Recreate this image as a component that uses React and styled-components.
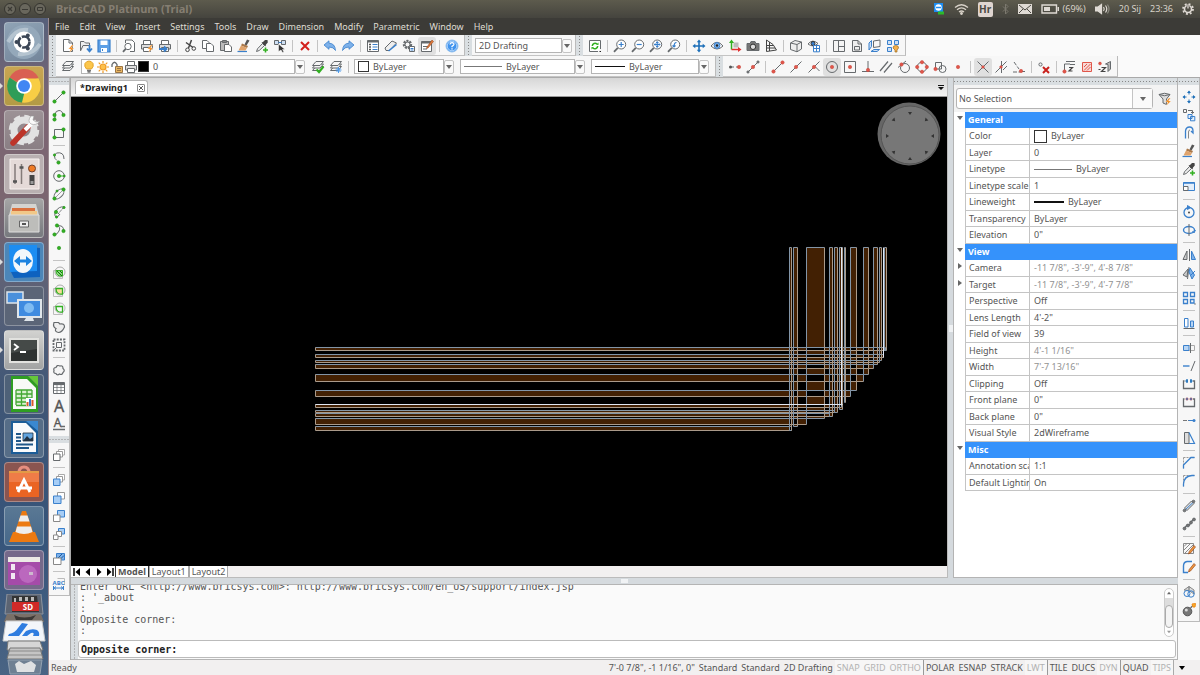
import React from "react";
import styled, { createGlobalStyle, css } from "styled-components";

const GREY = "#666a6d";
const BLUE = "#3a80cc";
const RED = "#e0564a";
const GREEN = "#32b022";
const ORANGE = "#f08a1c";

const GlobalStyle = createGlobalStyle`
* {
  box-sizing: border-box;
}
body {
  margin: 0;
  background: #fafafa;
  color: #555;
  font-family: "Noto Sans", "Open Sans", sans-serif;
  font-size: 9px;
  line-height: 12px;
}
button, select, input {
  font: inherit;
  color: inherit;
  margin: 0;
  padding: 0;
  border: 0;
  background: none;
  border-radius: 0;
}
`;

/* ---------- icons, all on a 14 x 14 grid ---------- */

const Dot = ({ x, y, c = GREEN, r = 1.7 }) => (
  <circle cx={x} cy={y} r={r} fill={c} stroke={c === GREEN ? "#1e8c14" : "#c8453b"} strokeWidth="0.5" />
);
const Bolt = () => <path d="M11 6 L7.5 10 H9.8 L8.5 13.5 L13 9 H10.5 L12.5 6Z" fill={ORANGE} stroke="#fff" strokeWidth="0.3" />;
const Sheets = () => (
  <g fill="#f5f5f5">
    <path d="M1.5 10.5 L5 6.500 H12.500 L9 10.500Z" />
    <path d="M1.5 8 L5 4 H12.500 L9 8Z" />
    <path d="M1.5 5.500 L5 1.500 H12.500 L9 5.500Z" />
  </g>
);
const Printer = () => (
  <g>
    <path d="M3.500 5.500 V1.500 H10.500 V5.500" fill="#fff" />
    <path d="M1.500 5.500 H12.500 V10 H1.500Z" fill="#ddd" />
    <path d="M3.500 8.500 H10.500 V12.500 H3.500Z" fill="#fff" />
  </g>
);
const Lens = ({ children }) => (
  <g>
    <circle cx="8.2" cy="5.500" r="4.500" fill="#fff" />
    <path d="M4.800 8.800 L1 12.800" strokeWidth="1.800" />
    <g stroke={BLUE} strokeWidth="1.200">{children}</g>
  </g>
);
const Brush = () => (
  <g stroke="none">
    <path d="M10 0.500 L12.500 1.500 L9.500 6.500 L7.500 5.500Z" fill="#555" />
    <path d="M5 4.500 L11 7 L10 9 L4 6.500Z" fill="#a9784a" />
    <path d="M4 6.500 L10 9 L8.500 11.500 H1.500Z" fill="#e0a36b" />
    <path d="M0.500 12.500 H10" stroke={BLUE} strokeWidth="1.200" />
  </g>
);
const Dropper = () => (
  <g>
    <path d="M1.500 12.500 L2.500 9.800 L7.500 4.500 L9.500 6.500 L4.200 11.500Z" fill="#eee" />
    <path d="M6.500 3.500 L8 3 L10 1 L12.500 1 L12.800 3.500 L11 5.500 L10.500 7.500Z" fill="#444" stroke="none" />
    <path d="M10.500 8.500 V13.500 M8 11 H13" stroke={GREEN} strokeWidth="1.600" />
  </g>
);
const Pencil = () => (
  <path d="M12 3.500 L13.500 5 L8.500 11 L6.500 12 L7.200 9.500Z" fill="#f0963c" stroke="#9a4c22" strokeWidth="0.700" />
);
const RoundArrows = () => (
  <g stroke={GREEN} strokeWidth="1.500">
    <path d="M4.300 7 A2.800 2.800 0 0 1 9 5" />
    <path d="M9.700 7 A2.800 2.800 0 0 1 5 9" />
    <path d="M8 5.800 L10.500 6 V3.500Z M6 8.200 L3.500 8 V10.500Z" fill={GREEN} stroke="none" />
  </g>
);

const ICONS = {
  newFile: <g><path d="M2.500 0.500 H8 L11.500 4 V12.500 H2.500Z" fill="#fff" /><path d="M8 0.500 V4 H11.500" /><Bolt /></g>,
  open: <g><path d="M1.500 11.500 V2.500 H5 L6.500 4 H10.500 V6" fill="#eee" /><path d="M1.500 12 L4 6.500 H10" /><path d="M10.500 6 V12 M8 9.500 L10.500 12.300 L13 9.500" stroke={BLUE} strokeWidth="1.800" /></g>,
  save: <g stroke={BLUE}><path d="M1 1 H13 V13 H1Z" fill="#5c9fe6" strokeWidth="1.200" /><path d="M3.500 1.500 H10.500 V6 H3.500Z M4 9 H10 V13 H4Z" fill="#fff" stroke="none" /><path d="M5.500 10 V12" /></g>,
  preview: <g><path d="M3.500 4 V1 H10 L12.500 3.500 V12.500 H8" fill="#fff" /><circle cx="6" cy="7.500" r="3.200" fill="#fff" /><path d="M3.700 9.800 L1 12.800" strokeWidth="1.800" /></g>,
  print: <g><Printer /><Bolt /></g>,
  publish: <g><Printer /><path d="M1 10 H8 M6 7.500 L8.500 10 L6 12.500" stroke={BLUE} strokeWidth="1.800" /></g>,
  cut: <g stroke="#444"><path d="M8.500 1 L5.500 9 M3 3.500 L10 8.500" strokeWidth="1.500" /><circle cx="4.500" cy="10.800" r="1.800" /><circle cx="10.800" cy="9.500" r="1.800" /></g>,
  copy: <g fill="#fff"><path d="M1.500 1.500 H6 L8.500 4 V9.500 H1.500Z" /><path d="M5.500 4.500 H10 L12.500 7 V12.500 H5.500Z" /></g>,
  paste: <g><path d="M1.500 2.500 H9.500 V11.500 H1.500Z" fill="#bbb" /><path d="M3.500 1.500 H7.500 V3.500 H3.500Z" fill="#888" /><path d="M5.500 5.500 H10 L12.500 8 V12.500 H5.500Z" fill="#fff" /></g>,
  brush: <Brush />,
  dropper: <Dropper />,
  select: <g><path d="M1.500 1.500 H5.500 V5.500 H1.500Z M8.500 1.500 H12.500 V5.500 H8.500Z" fill="#cfe0f4" /><path d="M5.500 3.500 H8.500" stroke={BLUE} /><path d="M5.500 5 L12 10.500 H9.500 L11 13 L9.500 13.500 L8 11 L5.500 12.500Z" fill="#333" stroke="#fff" strokeWidth="0.500" /></g>,
  erase: <path d="M3 3 L11 11 M11 3 L3 11" stroke="#d3201c" strokeWidth="2" />,
  undo: <path d="M1 6 L6 1.800 V4.200 Q12 4.300 12.500 11.500 Q10.500 8 6 8 V10.300Z" fill="#7db1ea" stroke={BLUE} strokeWidth="0.800" />,
  redo: <path d="M13 6 L8 1.800 V4.200 Q2 4.300 1.500 11.500 Q3.500 8 8 8 V10.300Z" fill="#7db1ea" stroke={BLUE} strokeWidth="0.800" />,
  props: <g><path d="M1.500 1.500 H12.500 V12.500 H1.500Z" fill="#fff" /><path d="M1.500 2.500 H12.500" strokeWidth="2" /><path d="M3 5.500 H5 M3 8 H5 M3 10.500 H5" stroke="#555" strokeWidth="1.400" /><path d="M6.500 5.500 H11.500 M6.500 8 H11.500 M6.500 10.500 H11.500" stroke={BLUE} strokeWidth="1.200" /></g>,
  eraser: <g><path d="M1 9 L8 2 L12.500 4 L5.500 11.500 L2 11.500Z" fill="#eee" /><path d="M4.500 12 L12.500 5.500" stroke={BLUE} strokeWidth="1.600" /></g>,
  gear: <g><circle cx="5.500" cy="5.500" r="3.500" strokeWidth="2.400" strokeDasharray="2 1" /><circle cx="5.500" cy="5.500" r="2.500" /><path d="M7.500 7.500 H12.500 V12.500 H7.500Z" fill="#fff" /><path d="M8.500 9.500 H11.500 M8.500 11 H11.500" stroke={BLUE} /></g>,
  edit: <g><path d="M1.500 2.500 H11.500 V12.500 H1.500Z" fill="#fff" /><path d="M1.500 3.500 H11.500" strokeWidth="2" /><path d="M3 7.500 H8 M3 10 H7" /><path d="M12 1 L13.500 2.500 L8 9 L6.500 9.500 L7 8Z" fill="#e07a3a" stroke="#9a4c22" strokeWidth="0.600" /></g>,
  help: <g><circle cx="7" cy="7" r="6" fill="#3f93ee" stroke="#8fbfee" /><circle cx="7" cy="7" r="4.800" stroke="#fff" strokeWidth="0.600" /><path d="M5 5.500 Q5.200 3.600 7 3.600 Q9 3.700 8.900 5.400 Q8.700 6.500 7 7.300 V8.300 M7 9.300 V10.500" stroke="#fff" strokeWidth="1.300" /></g>,
  refresh: <g><path d="M12.500 10 V1.500 H1.500 V12.500 H10" fill="#fff" /><RoundArrows /><path d="M11.500 12.500 H13" stroke="#222" /></g>,
  zoomIn: <Lens><path d="M8.200 3 V8 M5.700 5.500 H10.700" /></Lens>,
  zoomOut: <Lens><path d="M5.700 5.500 H10.700" /></Lens>,
  zoomAll: <Lens><path d="M8.200 2.300 V8.700 M5 5.500 H11.400" /><path d="M7 3.500 H9.500 M7 7.500 H9.500 M6.200 4.500 V6.500 M10.200 4.500 V6.500" /></Lens>,
  zoomPrev: <Lens><path d="M9.500 3.500 Q7 3.500 7 8 M5.500 6.500 L7 8 L8.500 6.500" /></Lens>,
  pan: <g stroke="#1d6fb8" strokeWidth="1.600"><path d="M7 2 V12 M2 7 H12" /><path d="M4.800 3.300 L7 0.500 L9.200 3.300Z M4.800 10.700 L7 13.500 L9.200 10.700Z M3.300 4.800 L0.500 7 L3.300 9.200Z M10.700 4.800 L13.500 7 L10.700 9.200Z" fill="#1d6fb8" stroke="none" /></g>,
  eye: <g><path d="M1 7 Q7 -0.500 13 7 Q7 13 1 7Z" fill="#fff" /><circle cx="7" cy="6.500" r="2.900" fill="#7db1ea" stroke={BLUE} /><circle cx="7" cy="6.500" r="1.200" fill="#222" stroke="none" /></g>,
  axes: <g><path d="M5.500 3.500 H10.500 V8.500 H5.500Z" fill="#bbb" stroke="none" /><path d="M3.500 10.500 V2" stroke={GREEN} strokeWidth="1.500" /><path d="M1 4 L3.500 0.500 L6 4Z" fill={GREEN} stroke="none" /><path d="M3.500 10.500 H12" stroke="#e03030" strokeWidth="1.500" /><path d="M10 8 L13.500 10.500 L10 13Z" fill="#e03030" stroke="none" /></g>,
  camera: <g><path d="M1 4.500 H4 L5 2.500 H9 L10 4.500 H13 V11.500 H1Z" fill="#777" /><circle cx="7" cy="7.800" r="2.700" fill="#ddd" stroke="#333" /></g>,
  persp: <g stroke="#444"><path d="M2.500 1 V12.500 L12.500 11 L9 5.500Z M2.500 6.500 H9.500 M5.500 3 V12 M2.500 9 L11 9" /></g>,
  cube: <g><path d="M1.500 4 L6 1.500 L12.500 3 V10 L8 12.800 L1.500 10.500Z" fill="#eee" /><path d="M1.500 4 L8 5.500 L12.500 3 M8 5.500 V12.800" /></g>,
  views: <g><path d="M1 5 Q5.500 -0.500 11 4.500 Q6 9 1 5Z" fill="#fff" /><circle cx="6" cy="4.500" r="2" fill={BLUE} stroke="#333" /><path d="M6.500 6.500 H12.500 V12.800 H6.500Z M6.500 9.500 H12.500 M9.500 6.500 V12.800" stroke={BLUE} fill="#fff" /></g>,
  viewports: <g fill="#f4f4f4"><path d="M1.500 1.500 H12.500 V12.500 H1.500Z M6.500 1.500 V12.500 M6.500 7.500 H12.500" /></g>,
  layoutNew: <g><path d="M2.500 1.500 H8 L11.500 5 V12.500 H2.500Z" fill="#eee" /><path d="M8 1.500 V5 H11.500 M4.500 7.500 H9.500 V11 H4.500Z" /></g>,
  planes: <g><path d="M5.500 2 L12 1 V7.500 L5.500 8.500Z" /><path d="M1 4 L3.500 1.500 V7.500 L1 11Z M3 12.500 L6 10.500 H11.500 L9 12.500Z" stroke={BLUE} fill="#cfe0f4" /></g>,
  blocks: <g stroke={BLUE} fill="#cfe0f4"><path d="M1.500 1.500 H5.500 V5.500 H1.500Z M8.500 1.500 H12.500 V5.500 H8.500Z M1.500 8.500 H5.500 V12.500 H1.500Z" /><path d="M7 9 Q7 6.500 9.800 6.500 Q12.800 6.500 12.500 9 L11 11 V13 H9 V11Z" fill="#f5b04a" stroke="#9a6a22" strokeWidth="0.700" /></g>,
  layers: <Sheets />,
  layerOk: <g><Sheets /><path d="M5.500 9.500 L8 12 L12.500 6.500" stroke={GREEN} strokeWidth="2.200" /></g>,
  layerNew: <g><Sheets /><path d="M9.500 7 V13 M6.500 10 H12.500 M7.500 8 L11.500 12 M11.500 8 L7.500 12" stroke="#4f9bea" /></g>,
  bulb: <g><path d="M4.500 9 Q2 6.500 3 3.500 Q4.500 1 7 1 Q9.500 1 11 3.500 Q12 6.500 9.500 9Z" fill="#fcc64b" stroke="#e3a32a" /><path d="M5 10.500 H9 M5.500 12 H8.500" stroke="#777" strokeWidth="1.300" /></g>,
  sun: <g stroke="#f09a22" strokeWidth="1.200"><circle cx="7" cy="7" r="3" fill="#fcc04b" /><path d="M7 1 V3 M7 11 V13 M1 7 H3 M11 7 H13 M2.700 2.700 L4.200 4.200 M9.800 9.800 L11.300 11.300 M11.300 2.700 L9.800 4.200 M4.200 9.800 L2.700 11.300" /></g>,
  lock: <g><path d="M2 7 V4.500 Q4.500 0 7 4.500 V7" strokeWidth="1.300" /><path d="M5.500 6.500 H12.500 V12.500 H5.500Z" fill="#e8b560" stroke="#9a7444" /><path d="M7 8.500 H11 M7 10.500 H11" stroke="#9a7444" /></g>,
  printer: <Printer />,
  snapEnd: <g><path d="M3 7 H11" strokeDasharray="3 2" /><circle cx="2.500" cy="7" r="1.500" fill="#555" stroke="none" /><Dot x={11} y={7} c={RED} /></g>,
  snapNear: <g><path d="M1.500 12.500 L12.500 1.500" /><Dot x={7} y={7} c={RED} /><circle cx="2" cy="12" r="1.100" fill="#777" /><circle cx="12" cy="2" r="1.100" fill="#777" /></g>,
  snapLine: <g><path d="M2.500 11.500 L11.500 2.500" /><Dot x={2.500} y={11.500} c={RED} /><Dot x={11.500} y={2.500} c={RED} /></g>,
  snapMid: <g><path d="M1.500 12.500 L12.500 1.500" /><Dot x={7} y={7} c={RED} /></g>,
  snapCross: <g><path d="M1.500 12.500 L12.500 1.500 M8.500 7 L12.500 11" /><Dot x={7} y={7} c={RED} /></g>,
  snapCentre: <g><circle cx="7" cy="7" r="5.500" /><Dot x={7} y={7} c={RED} /></g>,
  snapBox: <g><path d="M1.500 1.500 H12.500 V12.500 H1.500Z" /><Dot x={7} y={7} c={RED} /></g>,
  snapPerp: <g><path d="M7 1 V11 M1 11.500 H13" /><Dot x={7} y={10} c={RED} /></g>,
  snapPar: <path d="M1 11 L9 1.500 M5 12.500 L13 3" strokeWidth="1.200" />,
  snapTan: <g><circle cx="8" cy="8" r="4.500" /><path d="M1 7.500 L9 1" /><Dot x={4.500} y={4.500} c={RED} /></g>,
  snapQuad: <g><circle cx="7" cy="7" r="4.800" /><Dot x={7} y={2.200} c={RED} /><Dot x={7} y={11.800} c={RED} /><Dot x={2.200} y={7} c={RED} /><Dot x={11.800} y={7} c={RED} /></g>,
  snapIns: <g><path d="M2.500 2.500 H8.500 V9 H2.500Z" /><circle cx="9.500" cy="9" r="3.500" /><Dot x={2.500} y={9} c={RED} /></g>,
  snapNode: <Dot x={7} y={7} c={RED} />,
  snapX: <g><path d="M1.500 1.500 L12.500 12.500 M12.500 1.500 L1.500 12.500" /><Dot x={7} y={7} c={RED} r={1.300} /></g>,
  snapApp: <g><path d="M1.500 12.500 L12.500 1.500 M7.500 1 V13 M9 10 L13 6" /><Dot x={7} y={7} c={RED} r={1.300} /></g>,
  snapExt: <g><path d="M2 2 L7 9 M9 11.500 H13 M1 12 H8" strokeDasharray="4 1.500" /><Dot x={9} y={11} c={RED} /></g>,
  snapOff: <g><circle cx="3.500" cy="4.500" r="1.600" /><path d="M6 7 L12 13 M12 7 L6 13" stroke="#c9201c" strokeWidth="2" /></g>,
  trackZ: <g><path d="M2.500 11 V4 H8 M4 1.500 H13 M8 4.500 H13" /><path d="M7 7.500 H10.500 L7 11 H10.500" stroke="#444" strokeWidth="1.200" /><Dot x={2.500} y={11.500} c={RED} /></g>,
  hatchSnap: <path d="M2.500 2.500 H11.500 V11.500 H2.500Z M4 10.500 L10.500 4 M4 7 L7 4 M7 10.500 L10.500 7" stroke={RED} fill="#f7d9d6" />,
  cubeZ: <g><path d="M7.500 4 L12.500 1.500 V9 L10 11.500 V4.500Z" fill="#bbb" /><path d="M3.500 7.500 H7.500 L3.500 11.500 H7.500 M0.500 9.500 H2.500" stroke="#444" strokeWidth="1.200" /><Dot x={2} y={3.500} c={RED} r={1.400} /></g>,
  line: <g><path d="M2.500 11.500 L11.500 2.500" /><Dot x={2.500} y={11.500} /><Dot x={11.500} y={2.500} /></g>,
  polyline: <g><path d="M3 11 V6.500 Q3.500 2.500 7 2.500 Q10.500 2.500 11 7" /><Dot x={2.500} y={7} /><Dot x={2.500} y={11.500} /><Dot x={11.500} y={7} /></g>,
  rect: <g><path d="M2.500 3.500 H11.500 V11.500 H2.500Z" /><Dot x={2.500} y={11.500} /><Dot x={11.500} y={3.500} /></g>,
  arc: <g><path d="M3 7.500 Q1 4 4.500 2 Q12 0.500 12 8" /><Dot x={2.500} y={4} r={1.200} /><Dot x={6.500} y={11.500} /><path d="M3 7.500 L6 10.500" strokeDasharray="2 1" /></g>,
  circle: <g><circle cx="7" cy="7" r="5.300" /><Dot x={7} y={7} /><path d="M7 7 H12.500" stroke={GREEN} /><Dot x={12.300} y={7} r={1} /></g>,
  ellipse: <g><ellipse cx="7" cy="7" rx="6" ry="3.500" transform="rotate(-45 7 7)" /><path d="M3 11 L10 4" strokeWidth="0.600" /><Dot x={2.500} y={11.500} /><Dot x={11.500} y={2.500} /><Dot x={5} y={4} r={1.100} /></g>,
  ellipseArc: <g><path d="M12 2 Q7 1 3.500 6.500 Q1.500 11 5 12.500 L8 9" /><path d="M6 9 L12 2" strokeDasharray="2 1" /><Dot x={12} y={2.500} r={1.200} /><Dot x={4} y={7} /><Dot x={4.500} y={12} r={1.200} /></g>,
  spline: <g><path d="M5 2.500 Q9 4 7 8 Q5 12 2.500 11.500 M5 3 Q12 1.500 11.500 8" /><Dot x={5} y={2.500} /><Dot x={11.500} y={8} /><Dot x={2.500} y={11.500} /></g>,
  point: <Dot x={7} y={7} />,
  hatch: <g><path d="M1.500 4.500 H10.500 V12.500 H1.500Z" stroke="#bbb" /><circle cx="8" cy="6" r="5" stroke="#aaa" /><path d="M4 4.500 H10.500 V10 Q4 11 4 4.500Z" fill="#8bd381" stroke={GREEN} /><path d="M5 5 L10 10 M8 5 L10 7" stroke="#117a08" /></g>,
  gradient: <g><path d="M1.500 4.500 H10.500 V12.500 H1.500Z" stroke="#bbb" /><circle cx="8" cy="6" r="5" stroke="#aaa" /><path d="M4 4.500 H10.500 V10 Q4 11 4 4.500Z" fill="#f6dd9a" stroke={GREEN} strokeWidth="1.300" /></g>,
  boundary: <g><path d="M1.500 4.500 H10.500 V12.500 H1.500Z" stroke="#bbb" /><circle cx="8" cy="6" r="5" stroke="#bbb" /><path d="M4 4.500 H10.500 V10 Q4 11 4 4.500Z" stroke={GREEN} strokeWidth="1.300" /></g>,
  region: <path d="M2 2.500 H6.500 L8 4 Q12.500 3 12.500 7 Q10 12.500 6.500 12.500 Q2 11.500 4 8.500 Q0.500 7 2 2.500Z" fill="#eee" strokeWidth="1.200" />,
  wipeout: <g><path d="M1.500 1.500 H12.500 V12.500 H1.500Z" strokeWidth="1.800" strokeDasharray="2 1.200" /><path d="M4.500 4.500 H9.500 V9.500 H4.500Z M1.500 12.500 L4.500 9.500" /></g>,
  cloud: <path d="M4 10.500 Q1 10.500 2 7.500 Q1 4.500 4 4.500 Q5 1.500 8 3 Q11 2 11 5.500 Q13.500 7.500 11 9.500 Q10 12.500 7.500 11 Q5 12.800 4 10.500Z" fill="#f4f4f4" strokeWidth="1.200" />,
  table: <g><path d="M1.500 1.500 H12.500 V12.500 H1.500Z" fill="#fff" /><path d="M1.500 3 H12.500" strokeWidth="2.200" /><path d="M1.500 6.500 H12.500 M1.500 9.500 H12.500 M5 4 V12.500 M9 4 V12.500" strokeWidth="0.700" /></g>,
  text: <text x="7" y="12.500" textAnchor="middle" fontFamily="Noto Sans, sans-serif" fontSize="16" fill="#555" stroke="#555" strokeWidth="0.300">A</text>,
  mtext: <g><text x="5.500" y="9.500" textAnchor="middle" fontFamily="Noto Sans, sans-serif" fontSize="12" fill="#555" stroke="#555" strokeWidth="0.300">A</text><path d="M1 12.500 H13 M9 9.500 H13" strokeWidth="1.500" /></g>,
  orderAll: <g fill="#fff"><path d="M6.500 1.500 H12.500 V7 H6.500Z" stroke="#aaa" /><path d="M4.500 3.500 H10.500 V9 H4.500Z" stroke="#999" /><path d="M1.500 6 H8 V12.500 H1.500Z" /></g>,
  orderFront: <g fill="#fff"><path d="M6.500 1.500 H12.500 V7 H6.500Z" stroke="#aaa" /><path d="M4.500 3.500 H10.500 V9 H4.500Z" stroke="#999" /><path d="M1.500 6 H8 V12.500 H1.500Z" fill="#a6cdf6" stroke={BLUE} /></g>,
  orderUp: <g fill="#fff"><path d="M5.500 1.500 H12.500 V8 H5.500Z" stroke="#999" /><path d="M1.500 5 H9 V12.500 H1.500Z" fill="#a6cdf6" stroke={BLUE} /></g>,
  orderDown: <g fill="#fff"><path d="M5.500 1.500 H12.500 V8 H5.500Z" fill="#a6cdf6" stroke={BLUE} /><path d="M1.500 6 H8 V12.500 H1.500Z" stroke="#888" /></g>,
  orderBack: <g fill="#fff"><path d="M6.500 1.500 H12.500 V7 H6.500Z" fill="#a6cdf6" stroke={BLUE} /><path d="M4.500 4.500 H9.500 V9.500 H4.500Z" stroke="#888" /><path d="M1.500 8 H6 V12.500 H1.500Z" stroke="#888" /></g>,
  orderHatch: <g><path d="M4.500 1.500 H12.500 V8 H4.500Z" fill="#7db1ea" stroke={BLUE} /><path d="M5 7 L10 2 M8 7.500 L12 3.500" stroke="#1d5b9f" /><path d="M1.500 6 H9 V12.500 H1.500Z" fill="#fff" stroke="#888" /></g>,
  orderText: <g><path d="M5.500 1.500 H12.500 V8" stroke="#bbb" /><text x="6.500" y="8" textAnchor="middle" fontFamily="Noto Sans, sans-serif" fontSize="6" fontWeight="700" fill={BLUE} stroke="none">ABC</text><path d="M1.500 9 V13 M11.500 9 V13 M2 11 H11 M4 9.500 L2.200 11 L4 12.500 M9 9.500 L10.800 11 L9 12.500" stroke={BLUE} /></g>,
  move: <g stroke="#1d6fb8"><path d="M7 4.500 V1.500 M7 9.500 V12.500 M4.500 7 H1.500 M9.500 7 H12.500" /><path d="M5 3 L7 0.500 L9 3Z M5 11 L7 13.500 L9 11Z M3 5 L0.500 7 L3 9Z M11 5 L13.500 7 L11 9Z" fill="#1d6fb8" stroke="none" /></g>,
  copyObj: <g><path d="M1.500 1.500 H4.500 V4.500 H1.500Z M6 2.500 H10.500 V5 M9 4 L10.500 5.500 L12 4" /><path d="M6 6.500 H10 V10.500 H6Z M8.500 8.500 H12.800 V12.800 H8.500Z" stroke={BLUE} fill="#e4effb" /></g>,
  offset: <g><path d="M3.500 12.500 V5 Q4 1 7.500 1 Q11 1 11 5 V7 L9 5" stroke={BLUE} strokeWidth="1.300" /><path d="M6.500 12.500 V6 Q6.500 4 8 4" stroke="#888" /></g>,
  scale: <g><path d="M1.500 2.500 H12.500 V10.500 H1.500Z" stroke={BLUE} fill="#e4effb" /><path d="M1.500 3 H12.500" stroke={BLUE} strokeWidth="1.500" /><path d="M1.500 6.500 H6 V10.500 H1.500Z" fill="#fff" /></g>,
  rotate: <g stroke={BLUE}><circle cx="7" cy="7.500" r="5" strokeWidth="1.300" /><path d="M5.500 0.500 L8.500 2.500 L5.500 4.500Z" fill={BLUE} /><circle cx="7" cy="7.500" r="0.900" fill="#333" stroke="none" /></g>,
  rotate3d: <g><ellipse cx="7" cy="7" rx="5.500" ry="3.500" stroke={BLUE} strokeWidth="1.400" /><path d="M7 1 V13" /><path d="M10.500 8 L12 10 L13.500 7" stroke={BLUE} /></g>,
  mirror: <g><path d="M5 3 V11.500 H1Z" fill="#ccc" /><path d="M7.500 1 V13" /><path d="M9.500 3 V11.500 H13.500Z" fill="#7db1ea" stroke={BLUE} /></g>,
  mirror3d: <g><path d="M6 3 L1 9 L5 11Z" fill="#ccc" /><path d="M7 1 L5.500 13" /><path d="M8 2 L12.500 9 L10 13 L7 6Z M9 9 L13 5" fill="#7db1ea" stroke={BLUE} /></g>,
  array: <g><path d="M1.500 1.500 H5.500 V5.500 H1.500Z M8.500 1.500 H12.500 V5.500 H8.500Z M1.500 8.500 H5.500 V12.500 H1.500Z M8.500 8.500 H12 V12 H8.500Z" stroke={BLUE} strokeWidth="1.300" /><path d="M12.500 13 H13.500" stroke="#222" /></g>,
  align: <g><path d="M2.500 2.500 H6 V11 H2.500Z" stroke={BLUE} fill="#fff" /><path d="M8.500 5 H11.500 V11 H8.500Z" stroke={BLUE} fill="#b8d5f4" /><path d="M1.500 12.500 H12.500" /></g>,
  stretch: <g><path d="M1.500 4.500 H7 V9.500 H1.500Z" fill="#b8d5f4" stroke={BLUE} /><path d="M7 4.500 H12.500 V9.500 H7" stroke="#aaa" /><path d="M8.500 2 V12" /></g>,
  trim: <g><path d="M1 7 H7.500" stroke={BLUE} strokeWidth="1.400" /><path d="M9 12 L13 2" /></g>,
  lengthen: <g><path d="M2.500 4 H1.500 V11.500 H12.500 V4 H11" strokeWidth="1.300" /><path d="M5 2 V6 M9 2 V6 M3.500 4 H6 M8 4 H10.500" stroke="#1d6fb8" strokeWidth="1.300" /></g>,
  breakAt: <g><path d="M2.500 4 H1.500 V11.500 H12.500 V4 H11" strokeWidth="1.300" /><Dot x={5} y={4} c={BLUE} r={1.200} /><Dot x={9} y={4} c={BLUE} r={1.200} /></g>,
  join: <g><path d="M1 7.500 H5 M6 7.500 H9" stroke="#777" /><path d="M6.500 7.500 H11" stroke={BLUE} /><circle cx="12" cy="7.500" r="1.500" fill={BLUE} stroke="none" /></g>,
  taper: <g><path d="M2.500 1.500 H7 V12.500 H2.500Z" fill="#ddd" /><path d="M7 1.500 L12.500 12.500 H7" stroke={BLUE} strokeWidth="1.200" /></g>,
  chamfer: <g><path d="M1.500 1.500 H12.500 M1.500 1.500 V12.500" stroke="#999" strokeDasharray="2 1" /><path d="M1.500 12.500 V9 L9 1.500 H12.500" stroke={BLUE} strokeWidth="1.300" /></g>,
  fillet: <g><path d="M1.500 1.500 H12.500 M1.500 1.500 V12.500" stroke="#999" strokeDasharray="2 1" /><path d="M1.500 12.500 V10 Q2 2 10 1.500 H12.500" stroke={BLUE} strokeWidth="1.300" /></g>,
  editPoly: <g><path d="M2.500 9 L9.500 2 L12 4.500 L5 11.500Z" fill="#ddd" /><path d="M3 11 L11.500 3" stroke={BLUE} /><circle cx="2.500" cy="11.500" r="1.300" fill="#777" /><circle cx="11.500" cy="2.500" r="1.300" fill="#777" /></g>,
  editSpline: <g><path d="M2.500 11.500 L5 8 L7.500 8 L9 5 L11.500 2.500" strokeWidth="1.400" /><circle cx="2.500" cy="11.500" r="1.400" fill="#777" /><circle cx="6" cy="8.500" r="1.400" fill="#777" /><circle cx="9" cy="5.500" r="1.400" fill="#777" /><circle cx="12" cy="2.500" r="1.400" fill="#777" /></g>,
  editHatch: <g><path d="M1.500 1.500 H11.500 V11.500 H1.500Z M2 8 L8 2 M3 11 L11 3 M2 4.500 L4.500 2" stroke="#888" /><Pencil /></g>,
  editCurve: <g><path d="M10 1.500 H5 Q1.500 2 1.500 6 V12.500 H6" stroke={BLUE} strokeWidth="1.400" /><Pencil /></g>,
  solid: <g><path d="M2 5 L7 1.500 L12 5 V9 L7 5.500Z" fill="#ddd" stroke="#888" /><circle cx="5" cy="8.500" r="3" stroke={BLUE} /><circle cx="9" cy="9" r="3.200" stroke={BLUE} /><path d="M7 1.500 V5" /></g>,
  explode: <g><circle cx="5.500" cy="8.500" r="4.300" fill="#777" stroke="#555" /><circle cx="4.300" cy="7" r="1.500" fill="#ddd" stroke="none" /><path d="M8.500 5 L10.500 3" strokeWidth="1.500" /><path d="M10 1 L13.500 0.500 L13 4 L11 4Z" fill="#f5b02a" stroke={ORANGE} /></g>,
  filter: <g><path d="M1 2.500 Q6.500 0 12 2.500 L8.500 7 V12.500 L5 11 V7Z" fill="#ddd" /><path d="M1 2.500 Q6.500 5 12 2.500" /><Bolt /></g>,
};

const Glyph = styled.svg`
display: block;
flex: none;
overflow: visible;
fill: none;
stroke: ${GREY};
`;

const Icon = ({ name }) => (
  <Glyph width="14" height="14" viewBox="0 0 14 14" aria-hidden="true">{ICONS[name]}</Glyph>
);

/* ---------- top bars ---------- */

const Screen = styled.div`
min-height: 100vh;
display: flex;
flex-direction: column;
`;

const TitleBar = styled.header`
height: 18px;
display: flex;
align-items: center;
gap: 3px;
padding: 0 6px 0 4px;
background: linear-gradient(#5d5b4d, #45443e);
color: #d8d2c8;
`;

const WindowButton = styled.button`
width: 12px;
height: 12px;
display: grid;
place-items: center;
border: 1px solid #35342f;
border-radius: 50%;
background: #69675d;
`;

const Title = styled.h1`
flex: 1;
margin: 0 0 0 7px;
font-size: 11px;
line-height: 16px;
color: #857e72;
`;

const Indicators = styled.div`
display: flex;
align-items: center;
gap: 9px;
`;

const Battery = styled.span`
display: flex;
align-items: center;
gap: 4px;
`;

const Keyboard = styled.span`
width: 15px;
height: 15px;
border-radius: 2px;
background: #dfd5d0;
color: #4a4842;
font-weight: bold;
font-size: 10px;
line-height: 15px;
text-align: center;
`;

const Body = styled.div`
flex: 1;
display: flex;
`;

const App_Window = styled.div`
flex: 1;
min-width: 0;
display: flex;
flex-direction: column;
background: #fafafa;
`;

const MenuBar = styled.nav`
height: 17px;
display: flex;
align-items: center;
gap: 10px;
padding-left: 6px;
background: #3c3b37;
color: #dfdbd2;
`;

const ToolRow = styled.div`
height: 21px;
display: flex;
`;

const ToolGroup = styled.div`
display: flex;
align-items: center;
padding: 1px 3px 0;
border-right: 1px solid #bbb;
border-bottom: 1px solid #c4c4c4;
background: #f7f7f7;
`;

const ToolButton = styled.button`
width: 18px;
height: 18px;
display: grid;
place-items: center;
${(p) => p.$on && css`
background: #e0e0e0;
border-radius: 3px;
`}
`;

const Gap = styled.span`
flex: none;
width: 4px;
`;

const Divider = styled.span`
flex: none;
${(p) => p.$across
  ? css`width: 12px; height: 1px; margin: 3px 0; background: #c4c4c4;`
  : css`width: 1px; height: 12px; margin: 0 3px; background: #c4c4c4;`}
`;

const dots = css`
background-color: #d9dee1;
background-image: radial-gradient(circle, #888 0 1px, transparent 1px);
background-size: 3px 3px;
background-repeat: ${(p) => (p.$across ? "repeat-x" : "repeat-y")};
background-position: center;
`;

const Grip = styled.span`
flex: none;
${(p) => (p.$across ? "height: 7px; align-self: stretch;" : "width: 7px; align-self: stretch;")}
${dots}
`;

const Combo = styled.label`
display: flex;
align-items: center;
width: ${(p) => p.$width}px;
height: 16px;
`;

const ComboBox = styled.span`
flex: 1;
min-width: 0;
height: 15px;
display: flex;
align-items: center;
gap: ${(p) => (p.$tight ? "0" : "4px")};
padding: 0 ${(p) => (p.$tight ? "0" : "3px")};
border: 1px solid #b4b4b4;
background: #fff;
select {
  flex: 1;
  min-width: 0;
  appearance: none;
}
`;

const ComboArrow = styled.span`
width: 10px;
height: 14px;
display: grid;
place-items: center;
border: 1px solid #c4c4c4;
border-radius: 2px;
background: #fafafa;
`;

const ComboSet = styled.div`
display: flex;
gap: 6px;
padding: 0 3px 0 2px;
`;

const Swatch = styled.span`
flex: none;
width: ${(p) => (p.$big ? "13px" : "11px")};
height: ${(p) => (p.$big ? "13px" : "11px")};
border: 1px solid #333;
background: ${(p) => p.$color || "#fff"};
`;

const Rule = styled.span`
flex: none;
width: ${(p) => p.$length}px;
height: ${(p) => p.$thick || 1}px;
background: ${(p) => (p.$dark ? "#111" : "#777")};
`;

const Triangle = ({ turn = 0, size = 6, color = "#666" }) => (
  <svg width={size} height={size} viewBox="0 0 6 6" aria-hidden="true">
    <path d="M0 1 H6 L3 5Z" fill={color} transform={`rotate(${turn} 3 3)`} />
  </svg>
);

const Tools = ({ items, across }) =>
  items.map((item, i) =>
    item === "|" ? (
      <Divider key={i} $across={across} />
    ) : (
      <ToolButton key={i} type="button" aria-label={item.replace("*", "")} $on={item.endsWith("*")}>
        <Icon name={item.replace("*", "")} />
      </ToolButton>
    )
  );

const Select = ({ label, value, width, tight, children }) => (
  <Combo $width={width}>
    <ComboBox $tight={tight}>
      {children}
      <select aria-label={label} defaultValue={value}>
        <option>{value}</option>
      </select>
    </ComboBox>
    <ComboArrow><Triangle /></ComboArrow>
  </Combo>
);

/* ---------- launcher ---------- */

const Launcher = styled.nav`
flex: none;
width: 49px;
display: flex;
flex-direction: column;
align-items: center;
gap: 4px;
padding: 4px 1px 0 0;
border-right: 1px solid #9a8a90;
background: linear-gradient(#56607a 0, #7d6674 90px, #7b6670 180px, #566078 290px, #3f5676 380px, #36547a 520px, #4a6484 100%);
`;

const Tile = styled.button`
flex: none;
width: 40px;
height: 40px;
display: grid;
place-items: center;
border: 1px solid rgba(255, 255, 255, 0.3);
border-radius: 4px;
background: ${(p) => p.$tint};
`;

const Running = styled.span`
display: flex;
position: relative;
&::before {
  content: "";
  position: absolute;
  left: -4px;
  top: 17px;
  border: 3px solid transparent;
  border-left-color: ${(p) => (p.$on ? "#ddd" : "transparent")};
}
`;

const FoldedIcons = styled.div`
height: 82px;
`;

const LAUNCHER = [
  { name: "Dash", tint: "linear-gradient(160deg, #8fa3b5, #73859a)", art: <g><circle cx="18" cy="18" r="17" fill="#94a8ba" /><path d="M2 18 Q10 4 22 6 M34 20 Q26 32 12 30" stroke="#b5c4d0" strokeWidth="4" fill="none" /><circle cx="18" cy="18" r="10.500" fill="#fff" /><circle cx="18" cy="18" r="5.500" fill="none" stroke="#3b4656" strokeWidth="2.600" strokeDasharray="10.300 1.200" /><circle cx="10.500" cy="18" r="2" fill="#3b4656" /><circle cx="21.800" cy="11.500" r="2" fill="#3b4656" /><circle cx="21.800" cy="24.500" r="2" fill="#3b4656" /></g> },
  { name: "Chrome", on: true, tint: "linear-gradient(#c9a552, #b39a45)", art: <g><path d="M18 18 L3.600 9.500 A16.500 16.500 0 0 1 32.400 9.500Z" fill="#d95f53" /><path d="M3.600 9.500 A16.500 16.500 0 0 0 16 34.500 L22 22Z" fill="#2f9d58" /><path d="M32.600 10.500 A16.500 16.500 0 0 1 16 34.500 L20 18 L18 10.500Z" fill="#f8cd45" /><circle cx="18" cy="18" r="7.800" fill="#fff" /><circle cx="18" cy="18" r="6" fill="#4286f3" /></g> },
  { name: "Settings", tint: "linear-gradient(#9c9296, #8a7f84)", art: <g><circle cx="18" cy="18" r="12.500" fill="none" stroke="#e2e2e2" strokeWidth="5.500" strokeDasharray="6 3.800" /><circle cx="18" cy="18" r="10" fill="none" stroke="#e2e2e2" strokeWidth="7" /><path d="M7 31 L22 15" stroke="#bd3429" strokeWidth="5.500" strokeLinecap="round" /><path d="M19 18 L26 11" stroke="#fff" strokeWidth="4" /><path d="M25 4 Q21 9 25 12 Q30 14 34 9 L30 10 L27 8 L28 4Z" fill="#fafafa" stroke="#999" strokeWidth="0.600" /></g> },
  { name: "Tweaks", tint: "#b9b0b1", art: <g><path d="M4 3 H33 V33 H4Z" fill="#e5dad8" stroke="#f8f2f0" /><path d="M9 8 V28 M15.500 8 V28" stroke="#847b79" strokeWidth="1.500" /><path d="M7 25.500 H11 M13.500 11.500 H17.500" stroke="#555" strokeWidth="2.500" /><circle cx="26" cy="12.500" r="3.500" fill="#ef7a24" stroke="#75422a" /><path d="M23.500 19 H28.500 V29 H23.500Z" fill="#444" /><path d="M24.500 25 H27.500 V28 H24.500Z" fill="#999" /></g> },
  { name: "Files", tint: "linear-gradient(#a5a5a5, #77797e)", art: <g><path d="M6 4 H30 L33 15 V32 H3 V15Z" fill="#d4d4d0" /><path d="M6 8 H29 V15 H6Z" fill="#d9713e" /><path d="M5 11 H31 V16 H5Z" fill="#f1c888" /><path d="M3 15 H33 V32 H3Z" fill="#bdbdba" stroke="#ddd" /><path d="M13.500 21 H22.500 V27 H13.500Z" fill="#eee" stroke="#666" /><path d="M16 24 H20" stroke="#555" strokeWidth="2" /></g> },
  { name: "TeamViewer", on: true, tint: "#4c86b8", art: <g><path d="M4 1 L34 4 V33 L8 34 L4 26Z" fill="#0e62bf" /><path d="M3 1 H31 V27 L4 28Z" fill="#1c8df2" /><ellipse cx="17" cy="17" rx="10" ry="12" fill="#f4f8fb" /><path d="M8 17 L14 12 V15.500 H20 V12 L26 17 L20 22 V18.500 H14 V22Z" fill="#1c83e0" /></g> },
  { name: "Remote Desktop", tint: "#5b6577", art: <g><path d="M1 4 H17 V15 H1Z" fill="#4a90dc" stroke="#dfe5ea" strokeWidth="1.500" /><path d="M12 12 H35 V29 H12Z" fill="#3f8be0" stroke="#dfe5ea" strokeWidth="2" /><circle cx="23" cy="20" r="5" fill="#80bcf2" /><path d="M20 30 H27 L28 33 H18Z" fill="#dfe5ea" /></g> },
  { name: "Terminal", on: true, tint: "linear-gradient(#d2d2d0, #a2a3a3)", art: <g><path d="M3 6 H33 V31 H3Z" fill="#e2e2df" /><path d="M5 8 H31 V29 H5Z" fill="#2e3231" /><path d="M5 8 H31 V17 L5 21Z" fill="#454a48" /><path d="M8 12 L12 15 L8 18 M14 20 H20" stroke="#fff" strokeWidth="1.800" fill="none" /></g> },
  { name: "Calc", tint: "#4e6178", art: <g><path d="M5 0 H22 L32 10 V36 H5Z" fill="#2f9e22" /><path d="M22 0 H32 V10Z" fill="#65c83a" /><path d="M7 3 H21 L30 12 V33 H7Z" fill="#f8faf7" /><path d="M10 14 H26 V29 H10Z" fill="#d9f1d2" /><path d="M10 14 H26 M10 18 H26 M10 22 H26 M10 26 H26 M10 29.500 H26 M10 14 V29 M15.500 14 V29 M21 14 V29 M26 14 V29" stroke="#43a834" strokeWidth="1.300" /><path d="M20 22 H28 V30 H20Z" fill="#fff" /><path d="M21.500 30 V26 M26.500 30 V24" stroke="#d95b2a" strokeWidth="2" /><path d="M24 30 V23" stroke="#3a79c8" strokeWidth="2" /></g> },
  { name: "Writer", tint: "#566d87", art: <g><path d="M5 1 H22 L32 11 V34 H5Z" fill="#1b5c97" /><path d="M20 1 H32 V11Z" fill="#3a88d0" /><path d="M7 3 H20 L30 13 V32 H7Z" fill="#f8fafc" /><path d="M10 14 H15 M10 17.500 H15 M10 21 H15 M10 24.500 H27 M10 28 H23" stroke="#1f5789" strokeWidth="1.800" /><path d="M17 13 H27 V21 H17Z" fill="#62a5e0" stroke="#234" strokeWidth="0.800" /><path d="M17 21 L21 16 L24 19 L27 17 V21Z" fill="#234" /></g> },
  { name: "Software", tint: "#8a5550", art: <g><path d="M3 7 H33 V20 H3Z" fill="#ef7c47" /><path d="M3 18 H33 V33 H3Z" fill="#ea6423" /><path d="M13 9 Q13 3 18 3 Q23 3 23 9" stroke="#e68f80" strokeWidth="3" fill="none" /><path d="M3 8 H33" stroke="#e39a46" strokeWidth="2" /><path d="M12 28 L18 16 L24 28 M10 24 H26" stroke="#fff" strokeWidth="2.800" fill="none" /></g> },
  { name: "VLC", tint: "linear-gradient(#5a7894, #47688a)", art: <g><path d="M7 24 H29 L33 34 H3Z" fill="#ec7a12" /><path d="M16 3 H20 L28 27 Q18 31 8 27Z" fill="#ec7a12" /><path d="M14.500 7.500 H21.500 L23.500 13.500 H12.500Z M11 18.500 H25 L26.500 24 Q18 28 9.500 24Z" fill="#eee" /></g> },
  { name: "Show Desktop", tint: "#75698a", art: <g><path d="M2 5 H34 V33 H2Z" fill="#a54ba9" /><circle cx="22" cy="22" r="9" fill="#bb68be" /><path d="M2 5 H34 V10 H2Z" fill="#eceae6" /><path d="M5 12 H9 V18 H5Z M5 21 H9 V27 H5Z" fill="#f2e8f2" /><path d="M23 20 H27 V23 H23Z" fill="#cdb8ce" /></g> },
];

/* ---------- workspace ---------- */

const Workspace = styled.main`
flex: 1;
display: flex;
border-top: 1px solid #a9a9a9;
`;

const SideTools = styled.div`
flex: none;
align-self: flex-start;
width: ${(p) => p.$width}px;
display: flex;
flex-direction: column;
align-items: center;
padding-bottom: 2px;
border-right: 1px solid #bbb;
border-bottom: 1px solid #bbb;
background: #f7f7f7;
`;

const GripGap = styled.div`
height: 3px;
`;

const Centre = styled.div`
flex: 1;
min-width: 0;
display: flex;
flex-direction: column;
border-left: 1px solid #aaa;
`;

const Upper = styled.div`
flex: 1;
display: flex;
`;

const Doc = styled.section`
flex: 1;
min-width: 0;
display: flex;
flex-direction: column;
border-right: 1px solid #bbb;
`;

const DocTabs = styled.div`
height: 19px;
display: flex;
align-items: flex-end;
justify-content: space-between;
padding: 0 3px 2px 4px;
border-bottom: 1px solid #999;
background: linear-gradient(#d6d6d6, #f3f3f3);
`;

const DocTab = styled.div`
height: 14px;
display: flex;
align-items: center;
gap: 9px;
padding: 0 2px 0 4px;
border: 1px solid #b5b5b5;
border-bottom: 0;
border-radius: 3px 3px 0 0;
background: #fff;
color: #222;
font-weight: bold;
`;

const CloseTab = styled.button`
width: 8px;
height: 8px;
display: grid;
place-items: center;
border: 1px solid #888;
border-radius: 1px;
`;

const TabMenu = styled.button`
height: 12px;
display: grid;
place-items: center;
`;

const Canvas = styled.div`
flex: 1;
position: relative;
min-height: 340px;
overflow: hidden;
background: #000;
`;

const Drawing = styled.svg`
position: absolute;
inset: 0;
width: 100%;
height: 100%;
`;

const Compass = styled.svg`
position: absolute;
top: 5px;
right: 6px;
`;

const LayoutTabs = styled.div`
height: 12px;
display: flex;
background: #f2f0f0;
border-bottom: 1px solid #bbb;
`;

const NavButton = styled.button`
width: 11px;
display: grid;
place-items: center;
background: #fff;
`;

const LayoutTab = styled.button`
padding: 0 2px;
border: 1px solid ${(p) => (p.$active ? "#333" : "#aaa")};
border-top: 0;
border-bottom: 0;
background: #fff;
line-height: 11px;
font-weight: ${(p) => (p.$active ? "bold" : "normal")};
`;

const Splitter = styled.div`
flex: none;
display: grid;
place-items: center;
background: #d5dade;
${(p) => (p.$across ? "height: 6px;" : "width: 5px;")}
`;

const SplitMark = styled.span`
background: #f0f2f4;
${(p) => (p.$across ? "width: 7px; height: 4px;" : "width: 4px; height: 7px;")}
`;

/* ---------- properties ---------- */

const Panel = styled.aside`
flex: none;
width: 225px;
display: flex;
flex-direction: column;
border: 1px solid #b4b4b4;
border-top: 0;
background: #fff;
`;

const Selection = styled.div`
height: 27px;
display: flex;
align-items: center;
justify-content: space-between;
padding: 0 5px 0 2px;
background: #f3f3f3;
`;

const SelectionBox = styled.label`
width: 197px;
height: 21px;
display: flex;
border: 1px solid #b4b4b4;
border-radius: 3px;
background: #fff;
select {
  flex: 1;
  appearance: none;
  padding: 0 2px;
}
span {
  width: 20px;
  display: grid;
  place-items: center;
  border-left: 1px solid #c4c4c4;
  background: #fafafa;
}
`;

const PropTable = styled.table`
width: 100%;
table-layout: fixed;
border-collapse: separate;
border-spacing: 0;
line-height: 14px;
tr {
  height: 16px;
}
tr:nth-child(even) {
  height: 17px;
}
`;

const ToggleCell = styled.td`
padding: 3px 0 0 3px;
vertical-align: top;
line-height: 0;
`;

const GroupHead = styled.th`
padding: 0 3px;
text-align: left;
background: #3592fb;
color: #fff;
`;

const PropName = styled.th`
padding: 0 0 0 3px;
overflow: hidden;
white-space: nowrap;
text-align: left;
font-weight: normal;
border: 1px solid #c4c4c4;
border-top: 0;
`;

const PropValue = styled.td`
padding: 0;
border-bottom: 1px solid #c4c4c4;
color: ${(p) => (p.$muted ? "#929292" : "inherit")};
div {
  display: flex;
  align-items: center;
  gap: 4px;
  padding-left: 4px;
  height: 14px;
}
`;

const PROPS = [
  { group: "General" },
  { name: "Color", value: "ByLayer", mark: <Swatch $big /> },
  { name: "Layer", value: "0" },
  { name: "Linetype", value: "ByLayer", mark: <Rule $length={38} /> },
  { name: "Linetype scale", value: "1" },
  { name: "Lineweight", value: "ByLayer", mark: <Rule $length={30} $thick={2} $dark /> },
  { name: "Transparency", value: "ByLayer" },
  { name: "Elevation", value: "0\"" },
  { group: "View" },
  { name: "Camera", value: "-11 7/8\", -3'-9\", 4'-8 7/8\"", muted: true, more: true },
  { name: "Target", value: "-11 7/8\", -3'-9\", 4'-7 7/8\"", muted: true, more: true },
  { name: "Perspective", value: "Off" },
  { name: "Lens Length", value: "4'-2\"" },
  { name: "Field of view", value: "39" },
  { name: "Height", value: "4'-1 1/16\"", muted: true },
  { name: "Width", value: "7'-7 13/16\"", muted: true },
  { name: "Clipping", value: "Off" },
  { name: "Front plane", value: "0\"" },
  { name: "Back plane", value: "0\"" },
  { name: "Visual Style", value: "2dWireframe" },
  { group: "Misc" },
  { name: "Annotation scale", value: "1:1" },
  { name: "Default Lighting", value: "On" },
];

/* ---------- command line and status ---------- */

const Command = styled.section`
height: 76px;
display: flex;
border: 1px solid #b4b4b4;
border-left: 0;
background: #fafafa;
font-family: "DejaVu Sans Mono", monospace;
font-size: 10px;
line-height: 11px;
`;

const CommandMain = styled.div`
flex: 1;
min-width: 0;
display: flex;
flex-direction: column;
padding-bottom: 1px;
`;

const History = styled.div`
flex: 1;
min-height: 0;
display: flex;
justify-content: space-between;
`;

const Lines = styled.div`
align-self: stretch;
display: flex;
flex-direction: column;
justify-content: flex-end;
overflow: hidden;
padding: 0 0 4px 2px;
p {
  flex: none;
  margin: 0;
  white-space: pre;
}
`;

const ScrollTrack = styled.div`
width: 10px;
margin: 3px 3px 3px 0;
display: flex;
flex-direction: column;
align-items: center;
justify-content: space-between;
padding: 2px 0;
border: 1px solid #ccc;
border-radius: 5px;
background: linear-gradient(#fff 9px, #ddd 9px, #ddd 36px, #fff 36px);
`;

const ScrollThumb = styled.span`
width: 8px;
height: 23px;
margin-top: 8px;
border: 1px solid #aaa;
border-radius: 4px;
background: #f4f4f4;
`;

const Prompt = styled.label`
height: 18px;
display: flex;
align-items: center;
margin-right: 1px;
border: 1px solid #bbb;
border-radius: 3px;
background: #fff;
color: #222;
font-weight: bold;
input {
  width: 100%;
  padding-left: 2px;
  outline: 0;
}
`;

const StatusBar = styled.footer`
height: 16px;
display: flex;
align-items: center;
padding-left: 2px;
background: #f2f0f0;
`;

const Ready = styled.span`
flex: 1;
`;

const StatusItem = styled.button`
height: 16px;
padding: 0 2px;
white-space: nowrap;
border-left: ${(p) => (p.$edge ? "1px solid #999" : "0")};
background: ${(p) => (p.$off ? "#f7f6f6" : "none")};
color: ${(p) => (p.$off ? "#b2b2b2" : "inherit")};
`;

const StatusMenu = styled.button`
width: 27px;
height: 16px;
padding-left: 5px;
text-align: left;
border-left: 1px solid #aaa;
`;

const STATUS = [
  ["7'-0 7/8\", -1 1/16\", 0\""], ["Standard"], ["Standard"], ["2D Drafting"],
  ["SNAP", "off"], ["GRID", "off"], ["ORTHO", "off"],
  ["POLAR", "edge"], ["ESNAP"], ["STRACK"], ["LWT", "off"],
  ["TILE", "edge"], ["DUCS"], ["DYN", "off"],
  ["QUAD", "edge"], ["TIPS", "off"],
];

/* ---------- the drawing: [top, bottom, right end] and [left, right, bottom end] ---------- */

const LEFT = 244;
const TOP = 150;
const ACROSS = [
  [250, 253, 814], [257, 260, 812], [263, 265, 808], [267, 271, 802], [277, 284, 792],
  [293, 299, 779], [307, 310, 770], [313, 315, 763], [316, 319, 758], [321, 327, 735], [329, 333, 720],
];
const DOWN = [
  [718, 720, 333], [722, 726, 329], [735, 753, 321], [758, 761, 319], [763, 766, 315], [768, 771, 312],
  [773, 774, 305], [779, 785, 293], [792, 797, 277], [802, 806, 267], [808, 810, 263], [813, 815, 253],
];
const WHITE_ACROSS = [307];
const WHITE_DOWN = [[770, 308], [812, 260]];

const Plot = () => {
  const h = ACROSS.map(([a, b, e]) => `M${LEFT} ${a}H${e}V${b}H${LEFT}Z`).join("");
  const v = DOWN.map(([a, b, e]) => `M${a} ${TOP}V${e}H${b}V${TOP}Z`).join("");
  return (
    <Drawing aria-label="Pipe run">
      <path d={h + v} fill="#422003" fillRule="evenodd" />
      <g transform="translate(0.5 0.5)" fill="none" strokeWidth="1">
        {ACROSS.map(([a, b, e]) => (
          <g key={a}>
            <path d={`M${LEFT} ${a}H${e}V${b}`} stroke="#8295a8" />
            <path d={`M${LEFT} ${a}V${b}H${e}`} stroke="#aa9a8a" />
          </g>
        ))}
        {DOWN.map(([a, b, e]) => (
          <g key={a}>
            <path d={`M${b} ${e}H${a}V${TOP}H${b}`} stroke="#8295a8" />
            <path d={`M${b} ${TOP}V${e}`} stroke="#aa9a8a" />
          </g>
        ))}
        {WHITE_ACROSS.map((y) => <path key={y} d={`M${LEFT} ${y}H771`} stroke="#dfe6f2" />)}
        {WHITE_DOWN.map(([x, e]) => <path key={x} d={`M${x} ${TOP}V${e}`} stroke="#dfe6f2" />)}
      </g>
    </Drawing>
  );
};

const MENUS = ["File", "Edit", "View", "Insert", "Settings", "Tools", "Draw", "Dimension", "Modify", "Parametric", "Window", "Help"];

const App = () => (
  <>
    <GlobalStyle />
    <Screen>
      <TitleBar>
        <WindowButton type="button" aria-label="Close">
          <svg width="6" height="6"><path d="M1 1 L5 5 M5 1 L1 5" stroke="#3a3934" strokeWidth="1.200" /></svg>
        </WindowButton>
        <WindowButton type="button" aria-label="Minimize">
          <svg width="6" height="6"><path d="M0 3.500 H6" stroke="#3a3934" /></svg>
        </WindowButton>
        <WindowButton type="button" aria-label="Maximize">
          <svg width="6" height="6"><path d="M0.500 1.500 H5.500 V4.500 H0.500Z" stroke="#3a3934" fill="none" /></svg>
        </WindowButton>
        <Title>BricsCAD Platinum (Trial)</Title>
        <Indicators>
          <svg width="12" height="12"><path d="M1 0 H10 V9 H1Z" fill="#1c8df2" /><circle cx="5.500" cy="4.500" r="3.200" fill="#fff" /><path d="M3 4.500 H8" stroke="#1c8df2" strokeWidth="1.500" /><path d="M5 10 H11" stroke="#2db92a" strokeWidth="3" /></svg>
          <svg width="15" height="12" fill="none" stroke="#d8d2c8" strokeWidth="1.300"><path d="M1 4.500 Q7.500 -1 14 4.500" /><path d="M3 6.800 Q7.500 3 12 6.800" /><path d="M5 9 Q7.500 7 10 9" /><circle cx="7.500" cy="10.500" r="0.800" fill="#d8d2c8" /></svg>
          <Keyboard>Hr</Keyboard>
          <svg width="7" height="12"><path d="M1 3.500 L6 8.500 L3.500 11 V1 L6 3.500 L1 8.500" stroke="#7c796f" fill="none" /></svg>
          <svg width="14" height="10"><path d="M0 0 H14 V10 H0Z" fill="#dfdad4" /><path d="M1 1 L7 6 L13 1 M1 9 L5 5 M13 9 L9 5" stroke="#4a4842" fill="none" /></svg>
          <Battery>
            <svg width="18" height="10"><path d="M1 1 H15.500 V9 H1Z" stroke="#dfdad4" strokeWidth="1.400" fill="none" /><path d="M3 3 H9 V7 H3Z M16.500 3 H18 V7 H16.500Z" fill="#dfdad4" /></svg>
            <span>(69%)</span>
          </Battery>
          <svg width="15" height="12" fill="none" stroke="#dfdad4" strokeWidth="1.200"><path d="M0.500 4 H3 L6.500 1.500 V10.500 L3 8 H0.500Z" fill="#dfdad4" /><path d="M8.500 4 Q10 6 8.500 8 M10.500 2.500 Q13 6 10.500 9.500" /><path d="M12.500 1.500 Q15.500 6 12.500 10.500" stroke="#8c8a80" /></svg>
          <time>20 Sij</time>
          <time>23:36</time>
          <svg width="12" height="12" fill="none" stroke="#dfdad4"><circle cx="6" cy="6" r="3.500" strokeWidth="1.600" /><circle cx="6" cy="6" r="5" strokeWidth="1.800" strokeDasharray="1.900 2.030" /><path d="M6 2 V6" stroke="#4d4b43" strokeWidth="2.500" /><path d="M6 1.500 V5.500" strokeWidth="1.300" /></svg>
        </Indicators>
      </TitleBar>
      <Body>
        <Launcher>
          {LAUNCHER.map((app) => (
            <Running key={app.name} $on={app.on}>
              <Tile type="button" aria-label={app.name} $tint={app.tint}>
                <svg width="36" height="36" viewBox="0 0 36 36">{app.art}</svg>
              </Tile>
            </Running>
          ))}
          <FoldedIcons>
            <svg width="44" height="82" viewBox="0 0 44 82">
              <path d="M5 0 H39 L41 20 H3Z" fill="#5c6472" stroke="#8e95a0" />
              <path d="M10 2 H35 L37 18 H10Z" fill="#333" />
              <path d="M12 4 H14 V8 H12Z M17 3 H20 V7 H17Z M23 3 H26 V7 H23Z M29 3 H32 V7 H29Z" fill="#bbb" />
              <path d="M10 8 H37 V17 H10Z" fill="#d02a28" />
              <text x="26" y="16" textAnchor="middle" fontFamily="Noto Sans, sans-serif" fontSize="8" fontWeight="700" fill="#fff">SD</text>
              <path d="M5 20 H39 L42 28 H2Z" fill="#7a7068" />
              <path d="M12 21 Q22 26 34 21 L30 26 H14Z" fill="#3c3836" />
              <path d="M4 27 H40 L43 47 H1Z" fill="#f3f6fa" stroke="#ccc" />
              <path d="M7 40 Q13 39 16 34 L20 29 L26 30 L17 42 H6Z M20 42 L24 37 Q30 34 35 36 Q38 38 37 42 H31 Q33 38 29 39 L25 42Z" fill="#2f7de0" />
              <path d="M6 47 L38 47 L41 56 H5Z" fill="#d6d6d6" stroke="#777" />
              <path d="M8 54 L38 54 L41 65 H5Z" fill="#c4c4c4" stroke="#777" />
              <path d="M6 57 L40 57 M6 61 L40 61" stroke="#8a8a8a" />
              <path d="M6 66 H40 L38 80 H8Z" fill="#6f8093" stroke="#93a1b1" />
              <path d="M13 70 L17 67 L22 70 L29 67 L34 71 L32 78 H15Z" fill="#dfe1e3" />
            </svg>
          </FoldedIcons>
        </Launcher>
        <App_Window>
          <MenuBar>
            {MENUS.map((m) => <span key={m}>{m}</span>)}
          </MenuBar>
          <ToolRow>
            <Grip />
            <ToolGroup>
              <Tools items={["newFile", "open", "save", "|", "preview", "print", "publish", "|", "cut", "copy", "paste", "brush", "dropper", "select", "|", "erase", "|", "undo", "redo", "|", "props", "eraser", "gear", "edit*", "|", "help"]} />
            </ToolGroup>
            <Grip />
            <ToolGroup>
              <Select label="Workspace" value="2D Drafting" width={97} />
            </ToolGroup>
            <Grip />
            <ToolGroup>
              <Tools items={["refresh", "|", "zoomIn", "zoomOut", "zoomAll", "zoomPrev", "|", "pan", "eye", "axes", "camera", "persp", "|", "cube", "views", "|", "viewports", "layoutNew", "planes", "blocks"]} />
            </ToolGroup>
          </ToolRow>
          <ToolRow>
            <Grip />
            <ToolGroup>
              <Tools items={["layers"]} />
              <Gap />
              <Select label="Layer" value="0" width={224} tight>
                <Icon name="bulb" />
                <Icon name="sun" />
                <Icon name="lock" />
                <Icon name="printer" />
                <Swatch $color="#000" />
                <Gap />
              </Select>
              <Gap />
              <Tools items={["layerOk", "layerNew", "|"]} />
              <ComboSet>
                <Select label="Color" value="ByLayer" width={100}><Swatch /></Select>
                <Select label="Linetype" value="ByLayer" width={125}><Rule $length={38} /></Select>
                <Select label="Lineweight" value="ByLayer" width={118}><Rule $length={30} $dark /></Select>
              </ComboSet>
            </ToolGroup>
            <Grip />
            <ToolGroup>
              <Tools items={["snapEnd", "snapNear", "|", "snapLine", "snapMid", "snapCross", "snapCentre*", "snapBox", "snapPerp", "snapPar", "snapTan", "snapQuad", "snapIns", "snapNode", "|", "snapX*", "snapApp", "snapExt", "|", "snapOff", "|", "trackZ", "hatchSnap", "cubeZ"]} />
            </ToolGroup>
          </ToolRow>
          <Workspace>
            <SideTools $width={21}>
              <Grip $across />
              <GripGap />
              <Tools across items={["line", "polyline", "rect", "|", "arc", "circle", "ellipse", "ellipseArc", "spline", "point", "|", "hatch", "gradient", "boundary", "region", "wipeout", "|", "cloud", "table", "text", "mtext"]} />
              <GripGap />
              <Grip $across />
              <GripGap />
              <Tools across items={["orderAll", "|", "orderFront", "orderUp", "orderDown", "orderBack", "|", "orderHatch", "|", "orderText"]} />
            </SideTools>
            <Centre>
              <Upper>
                <Doc>
                  <DocTabs>
                    <DocTab>
                      *Drawing1
                      <CloseTab type="button" aria-label="Close drawing">
                        <svg width="4" height="4"><path d="M0 0 L4 4 M4 0 L0 4" stroke="#555" /></svg>
                      </CloseTab>
                    </DocTab>
                    <TabMenu type="button" aria-label="Drawings">
                      <svg width="6" height="6"><path d="M0 0 H6 V1 H0Z M0 2 H6 L3 5Z" fill="#111" /></svg>
                    </TabMenu>
                  </DocTabs>
                  <Canvas>
                    <Plot />
                    <Compass width="64" height="64" viewBox="-32 -32 64 64">
                      <circle r="31.500" fill="#666" />
                      <circle cx="1" cy="1" r="29" fill="#777" stroke="#555" />
                      {[0, 45, 90, 135, 180, 225, 270, 315].map((a) => (
                        <path key={a} d="M-2 -24 H2 L0 -21Z" fill="#333" transform={`translate(1 2) rotate(${a})`} />
                      ))}
                    </Compass>
                  </Canvas>
                  <LayoutTabs>
                    <NavButton type="button" aria-label="First"><svg width="8" height="8"><path d="M1 0 V8" stroke="#000" strokeWidth="1.500" /><path d="M7 0 V8 L2.500 4Z" /></svg></NavButton>
                    <NavButton type="button" aria-label="Previous"><svg width="8" height="8"><path d="M6 0 V8 L1.500 4Z" /></svg></NavButton>
                    <NavButton type="button" aria-label="Next"><svg width="8" height="8"><path d="M2 0 V8 L6.500 4Z" /></svg></NavButton>
                    <NavButton type="button" aria-label="Last"><svg width="8" height="8"><path d="M7 0 V8" stroke="#000" strokeWidth="1.500" /><path d="M1 0 V8 L5.500 4Z" /></svg></NavButton>
                    <LayoutTab type="button" $active>Model</LayoutTab>
                    <LayoutTab type="button">Layout1</LayoutTab>
                    <LayoutTab type="button">Layout2</LayoutTab>
                  </LayoutTabs>
                </Doc>
                <Splitter><SplitMark /></Splitter>
                <Panel>
                  <Grip $across />
                  <Selection>
                    <SelectionBox>
                      <select aria-label="Selection" defaultValue="No Selection">
                        <option>No Selection</option>
                      </select>
                      <span><Triangle /></span>
                    </SelectionBox>
                    <Icon name="filter" />
                  </Selection>
                  <PropTable>
                    <colgroup>
                      <col width="11" />
                      <col width="65" />
                      <col />
                    </colgroup>
                    <tbody>
                      {PROPS.map((p) => p.group ? (
                        <tr key={p.group}>
                          <ToggleCell><Triangle /></ToggleCell>
                          <GroupHead colSpan="2" scope="colgroup">{p.group}</GroupHead>
                        </tr>
                      ) : (
                        <tr key={p.name}>
                          <ToggleCell>{p.more && <Triangle turn={-90} />}</ToggleCell>
                          <PropName scope="row">{p.name}</PropName>
                          <PropValue $muted={p.muted}><div>{p.mark}{p.value}</div></PropValue>
                        </tr>
                      ))}
                    </tbody>
                  </PropTable>
                </Panel>
              </Upper>
              <Splitter $across><SplitMark $across /></Splitter>
              <Command>
                <Grip />
                <CommandMain>
                  <History>
                    <Lines>
                      <p>Enter URL &lt;http://www.bricsys.com&gt;: http://www.bricsys.com/en_US/support/index.jsp</p>
                      <p>: '_about</p>
                      <p>:</p>
                      <p>Opposite corner:</p>
                      <p>:</p>
                    </Lines>
                    <ScrollTrack>
                      <Triangle turn={180} size={4} />
                      <ScrollThumb />
                      <Triangle size={4} color="#999" />
                    </ScrollTrack>
                  </History>
                  <Prompt>
                    <input aria-label="Command" defaultValue="Opposite corner:" />
                  </Prompt>
                </CommandMain>
              </Command>
            </Centre>
            <SideTools $width={22}>
              <Grip $across />
              <GripGap />
              <Tools across items={["move", "copyObj", "offset", "brush", "dropper", "scale", "|", "rotate", "rotate3d", "|", "mirror", "mirror3d", "|", "array", "|", "align", "|", "stretch", "trim", "lengthen", "breakAt", "join", "taper", "|", "chamfer", "fillet", "|", "editPoly", "editSpline", "|", "editHatch", "editCurve", "|", "solid", "explode"]} />
            </SideTools>
          </Workspace>
          <StatusBar>
            <Ready>Ready</Ready>
            {STATUS.map(([text, kind], i) => (
              <StatusItem key={i} type="button" $off={kind === "off"} $edge={kind === "edge"}>{text}</StatusItem>
            ))}
            <StatusMenu type="button" aria-label="Status bar menu"><Triangle color="#000" /></StatusMenu>
          </StatusBar>
        </App_Window>
      </Body>
    </Screen>
  </>
);

export default App;
